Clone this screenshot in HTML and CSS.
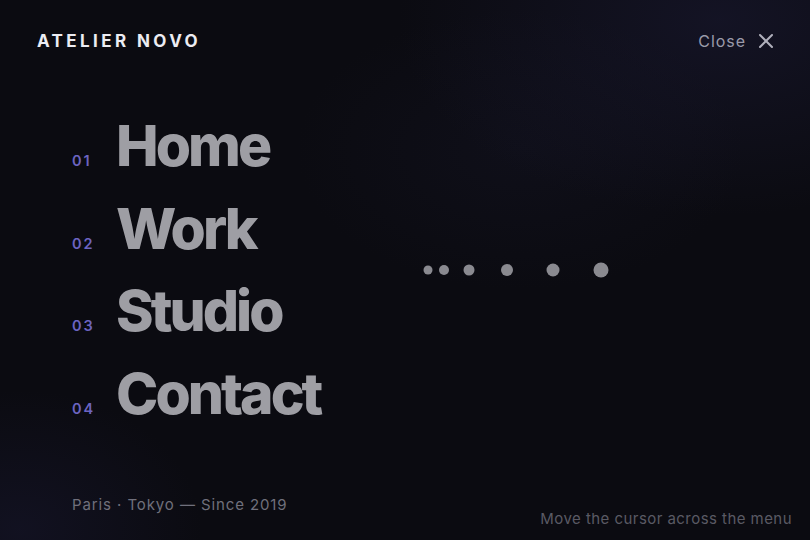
FILE: index.html
```html
<!DOCTYPE html>
<html>
<head>
<meta charset="utf-8">
<link rel="stylesheet" href="styles.css">
</head>
<body>
<div class="page">
  <header class="top">
    <div class="brand">ATELIER NOVO</div>
    <button class="close">Close
      <svg width="16" height="16" viewBox="0 0 16 16"><path d="M2 2L14 14M14 2L2 14" stroke="currentColor" stroke-width="2" stroke-linecap="round"/></svg>
    </button>
  </header>
  <nav class="menu">
    <a class="item"><span class="num">01</span><span class="label">Home</span></a>
    <a class="item"><span class="num">02</span><span class="label">Work</span></a>
    <a class="item"><span class="num">03</span><span class="label">Studio</span></a>
    <a class="item"><span class="num">04</span><span class="label">Contact</span></a>
  </nav>
  <footer class="foot">
    <div class="place">Paris · Tokyo — Since 2019</div>
    <div class="hint">Move the cursor across the menu</div>
  </footer>
  <div class="trail">
    <span class="dot" style="left:428px;top:270px;width:9px;height:9px"></span>
    <span class="dot" style="left:444px;top:270px;width:10px;height:10px"></span>
    <span class="dot" style="left:469px;top:270px;width:11px;height:11px"></span>
    <span class="dot" style="left:507px;top:270px;width:12px;height:12px"></span>
    <span class="dot" style="left:553px;top:270px;width:13px;height:13px"></span>
    <span class="dot" style="left:601px;top:270px;width:15px;height:15px"></span>
  </div>
</div>
</body>
</html>
```
FILE: styles.css
```css
* { box-sizing: border-box; }
html, body { margin: 0; padding: 0; }
body {
  width: 810px; height: 540px; overflow: hidden;
  font-family: Inter, "Noto Sans", sans-serif;
  background: #0b0b11;
}
.page {
  position: relative;
  width: 810px; height: 540px;
  background:
    radial-gradient(ellipse 460px 280px at 720px 20px, rgba(34,33,68,0.38), rgba(34,33,68,0) 70%),
    radial-gradient(ellipse 260px 200px at 20px 530px, rgba(30,29,62,0.35), rgba(30,29,62,0) 70%),
    radial-gradient(ellipse 320px 200px at 520px 150px, rgba(24,24,44,0.3), rgba(24,24,44,0) 70%),
    #0b0b11;
  display: flex; flex-direction: column;
}
.top {
  display: flex; justify-content: space-between; align-items: center;
  padding: 29px 36px 0 37px;
  height: 52px;
}
.brand {
  color: #ececf2; font-weight: 700; font-size: 17px; letter-spacing: 0.2em;
}
.close {
  background: none; border: 0; padding: 0; font-family: inherit;
  color: #9a9aaa; font-size: 16px; letter-spacing: 0.06em;
  display: flex; align-items: center; gap: 12px;
}
.close svg { color: #b0b0bc; }
.menu {
  display: flex; flex-direction: column;
  padding: 64px 0 0 72px;
}
.item {
  display: flex; align-items: baseline; height: 82.5px;
}
.num {
  width: 44px; color: #6c64c0; font-size: 14.5px; font-weight: 600; letter-spacing: 0.14em;
}
.label {
  color: #9e9ea4; font-size: 57px; font-weight: 800; letter-spacing: -0.052em; line-height: 60px;
}
.foot {
  margin-top: auto;
  display: flex; justify-content: space-between; align-items: flex-end;
  padding: 0 18px 12px 72px;
}
.place {
  color: #70707c; font-size: 15px; letter-spacing: 0.06em; margin-bottom: 14px;
}
.hint {
  color: #5a5a64; font-size: 15px; letter-spacing: 0.03em;
}
.trail { position: absolute; inset: 0; pointer-events: none; }
.dot {
  position: absolute; border-radius: 50%; background: #8a8a90;
  transform: translate(-50%, -50%);
}
```
